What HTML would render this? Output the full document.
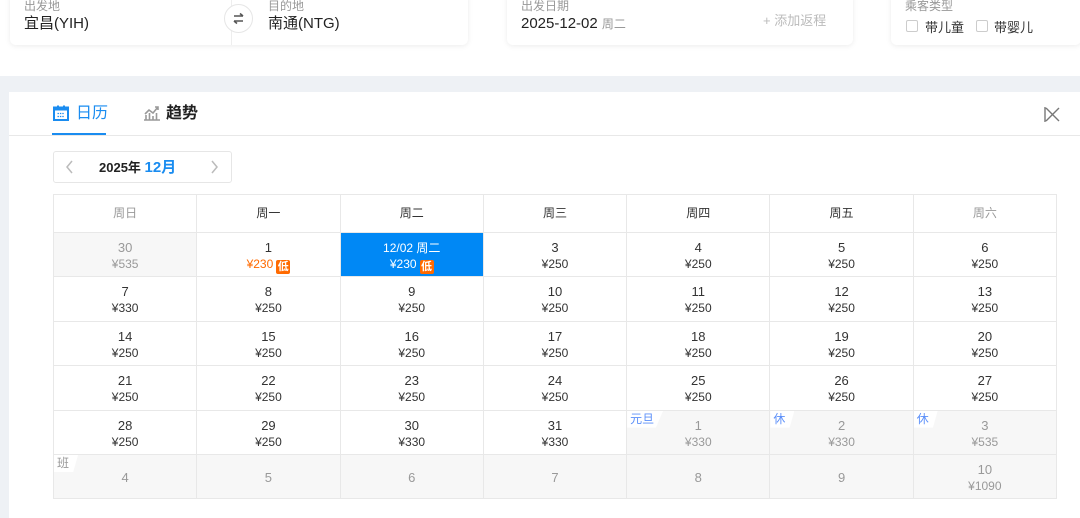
<!DOCTYPE html>
<html><head><meta charset="utf-8"><style>
*{box-sizing:border-box;margin:0;padding:0}
body{width:1080px;height:518px;overflow:hidden;background:#fff;font-family:"Liberation Sans","Noto Sans CJK SC",sans-serif;position:relative;color:#333}
.card{position:absolute;background:#fff;border-radius:6px;box-shadow:0 1px 6px rgba(0,0,0,.08)}
.lbl{position:absolute;font-size:12px;color:#999;line-height:12px}
.val{position:absolute;font-size:15px;color:#222;line-height:16px}
.band{position:absolute;left:0;top:76px;width:1080px;height:442px;background:#eef1f5}
.panel{position:absolute;left:9px;top:92px;width:1071px;height:426px;background:#fff}
.grid{position:absolute;left:53px;top:194px;width:1004px;display:grid;grid-template-columns:repeat(7,1fr);grid-template-rows:37px repeat(6,43.4px);gap:1px;padding:1px;background:#e8e8e8}
.grid>div{background:#fff;text-align:center;font-size:12px;position:relative}
.h{line-height:36px;font-size:13px;color:#333}
.h.g{color:#999}
.c .d{display:block;padding-top:7px;line-height:16px;font-size:13px;color:#333}
.c .p{display:block;line-height:16px;font-size:12px;color:#333}
.c.o{background:#f7f7f7}
.c.o .d,.c.o .p{color:#999}
.c.o .d.only{padding-top:15px}
.c.s{background:#0088f5}
.c.s .d,.c.s .p{color:#fff}
.c .p.r{color:#ff6a00}
.lo{display:inline-block;background:#ff6a00;color:#fff;font-size:11px;line-height:14px;width:14px;height:14px;vertical-align:-2px;margin-left:3px;border-radius:2px;font-weight:bold}
.tag{position:absolute;left:0;top:0;background:#fff;font-size:12px;line-height:17px;padding:0 9px 0 3px;color:#5b8ff9;clip-path:polygon(0 0,100% 0,80% 100%,0 100%);border-radius:0 0 6px 0}
.tag.gr{color:#999}
</style></head><body>
<div class="card" style="left:10px;top:-10px;width:458px;height:55px">
 <div class="lbl" style="left:14px;top:10px">出发地</div>
 <div class="val" style="left:14px;top:26px">宜昌(YIH)</div>
 <div style="position:absolute;left:221px;top:10px;width:1px;height:45px;background:#eee"></div>
 <div style="position:absolute;left:214px;top:14px;width:29px;height:29px;border:1px solid #e6e6e6;border-radius:50%;background:#fff">
  <svg width="27" height="27" viewBox="0 0 27 27" style="position:absolute;left:0;top:0"><path d="M9 11h9M15 8.5l3 2.5M18 16H9M12 18.5l-3-2.5" stroke="#555" stroke-width="1.6" fill="none"/></svg></div>
 <div class="lbl" style="left:258px;top:10px">目的地</div>
 <div class="val" style="left:258px;top:26px">南通(NTG)</div>
</div>
<div class="card" style="left:507px;top:-10px;width:346px;height:55px">
 <div class="lbl" style="left:14px;top:10px">出发日期</div>
 <div class="val" style="left:14px;top:26px">2025-12-02 <span style="font-size:12px;color:#999">周二</span></div>
 <div style="position:absolute;left:256px;top:20px;font-size:13px;color:#bbb">+ 添加返程</div>
</div>
<div class="card" style="left:891px;top:-10px;width:190px;height:55px">
 <div class="lbl" style="left:14px;top:10px">乘客类型</div>
 <div style="position:absolute;left:15px;top:30px;width:12px;height:12px;border:1px solid #ccc;border-radius:2px"></div>
 <div style="position:absolute;left:34px;top:27px;font-size:13px">带儿童</div>
 <div style="position:absolute;left:85px;top:30px;width:12px;height:12px;border:1px solid #ccc;border-radius:2px"></div>
 <div style="position:absolute;left:103px;top:27px;font-size:13px">带婴儿</div>
</div>
<div class="band"></div>
<div class="panel">
 <svg width="18" height="18" viewBox="0 0 18 18" style="position:absolute;left:43px;top:12px"><rect x="2" y="3.5" width="14" height="12.5" fill="none" stroke="#1a8cf0" stroke-width="2"/><rect x="2" y="3.5" width="14" height="3" fill="#1a8cf0"/><path d="M6 1.5v3M12 1.5v3" stroke="#1a8cf0" stroke-width="2"/><path d="M5.5 9.5h7M5.5 12.5h7" stroke="#1a8cf0" stroke-width="1.2" stroke-dasharray="1.4 1"/></svg>
 <div style="position:absolute;left:67px;top:10px;font-size:16px;line-height:24px;color:#1a8cf0">日历</div>
 <div style="position:absolute;left:43px;top:41px;width:54px;height:2px;background:#1a8cf0"></div>
 <svg width="18" height="18" viewBox="0 0 18 18" style="position:absolute;left:134px;top:12px"><path d="M1 16h16M3 16v-5M6.5 16v-7M10 16v-4M13.5 16v-7M2 10l4-4 4 3 5-6M12 3h3v3" stroke="#999" stroke-width="1.6" fill="none"/></svg>
 <div style="position:absolute;left:157px;top:10px;font-size:16px;line-height:24px;color:#222;font-weight:bold">趋势</div>
 <div style="position:absolute;left:0;top:43px;width:1071px;height:1px;background:#e8e8e8"></div>
 <svg width="20" height="20" viewBox="0 0 20 20" style="position:absolute;left:1033px;top:12px"><path d="M3 3v15M4 4l13 13M17 4L4 17" stroke="#777" stroke-width="1.4" fill="none"/></svg>
 <div style="position:absolute;left:44px;top:59px;width:179px;height:32px;border:1px solid #e6e6e6;border-radius:3px">
  <svg width="10" height="14" viewBox="0 0 10 14" style="position:absolute;left:11px;top:8px"><path d="M7 1L2 7l5 6" stroke="#bbb" stroke-width="1.5" fill="none"/></svg>
  <div style="position:absolute;left:45px;top:6px;font-size:13px;line-height:20px;font-weight:bold;color:#222">2025年 <span style="color:#1a8cf0;font-size:15px">12月</span></div>
  <svg width="10" height="14" viewBox="0 0 10 14" style="position:absolute;left:155px;top:8px"><path d="M3 1l5 6-5 6" stroke="#bbb" stroke-width="1.5" fill="none"/></svg>
 </div>
</div>
<div class="grid">
<div class="h g">周日</div><div class="h">周一</div><div class="h">周二</div><div class="h">周三</div><div class="h">周四</div><div class="h">周五</div><div class="h g">周六</div>
<div class="c o"><span class="d">30</span><span class="p">¥535</span></div>
<div class="c"><span class="d">1</span><span class="p r">¥230<span class="lo">低</span></span></div>
<div class="c s"><span class="d" style="font-size:12px">12/02 周二</span><span class="p">¥230<span class="lo">低</span></span></div>
<div class="c"><span class="d">3</span><span class="p">¥250</span></div>
<div class="c"><span class="d">4</span><span class="p">¥250</span></div>
<div class="c"><span class="d">5</span><span class="p">¥250</span></div>
<div class="c"><span class="d">6</span><span class="p">¥250</span></div>
<div class="c"><span class="d">7</span><span class="p">¥330</span></div>
<div class="c"><span class="d">8</span><span class="p">¥250</span></div>
<div class="c"><span class="d">9</span><span class="p">¥250</span></div>
<div class="c"><span class="d">10</span><span class="p">¥250</span></div>
<div class="c"><span class="d">11</span><span class="p">¥250</span></div>
<div class="c"><span class="d">12</span><span class="p">¥250</span></div>
<div class="c"><span class="d">13</span><span class="p">¥250</span></div>
<div class="c"><span class="d">14</span><span class="p">¥250</span></div>
<div class="c"><span class="d">15</span><span class="p">¥250</span></div>
<div class="c"><span class="d">16</span><span class="p">¥250</span></div>
<div class="c"><span class="d">17</span><span class="p">¥250</span></div>
<div class="c"><span class="d">18</span><span class="p">¥250</span></div>
<div class="c"><span class="d">19</span><span class="p">¥250</span></div>
<div class="c"><span class="d">20</span><span class="p">¥250</span></div>
<div class="c"><span class="d">21</span><span class="p">¥250</span></div>
<div class="c"><span class="d">22</span><span class="p">¥250</span></div>
<div class="c"><span class="d">23</span><span class="p">¥250</span></div>
<div class="c"><span class="d">24</span><span class="p">¥250</span></div>
<div class="c"><span class="d">25</span><span class="p">¥250</span></div>
<div class="c"><span class="d">26</span><span class="p">¥250</span></div>
<div class="c"><span class="d">27</span><span class="p">¥250</span></div>
<div class="c"><span class="d">28</span><span class="p">¥250</span></div>
<div class="c"><span class="d">29</span><span class="p">¥250</span></div>
<div class="c"><span class="d">30</span><span class="p">¥330</span></div>
<div class="c"><span class="d">31</span><span class="p">¥330</span></div>
<div class="c o"><span class="tag">元旦</span><span class="d">1</span><span class="p">¥330</span></div>
<div class="c o"><span class="tag">休</span><span class="d">2</span><span class="p">¥330</span></div>
<div class="c o"><span class="tag">休</span><span class="d">3</span><span class="p">¥535</span></div>
<div class="c o"><span class="tag gr">班</span><span class="d only">4</span></div>
<div class="c o"><span class="d only">5</span></div>
<div class="c o"><span class="d only">6</span></div>
<div class="c o"><span class="d only">7</span></div>
<div class="c o"><span class="d only">8</span></div>
<div class="c o"><span class="d only">9</span></div>
<div class="c o"><span class="d">10</span><span class="p">¥1090</span></div>
</div>
</body></html>
